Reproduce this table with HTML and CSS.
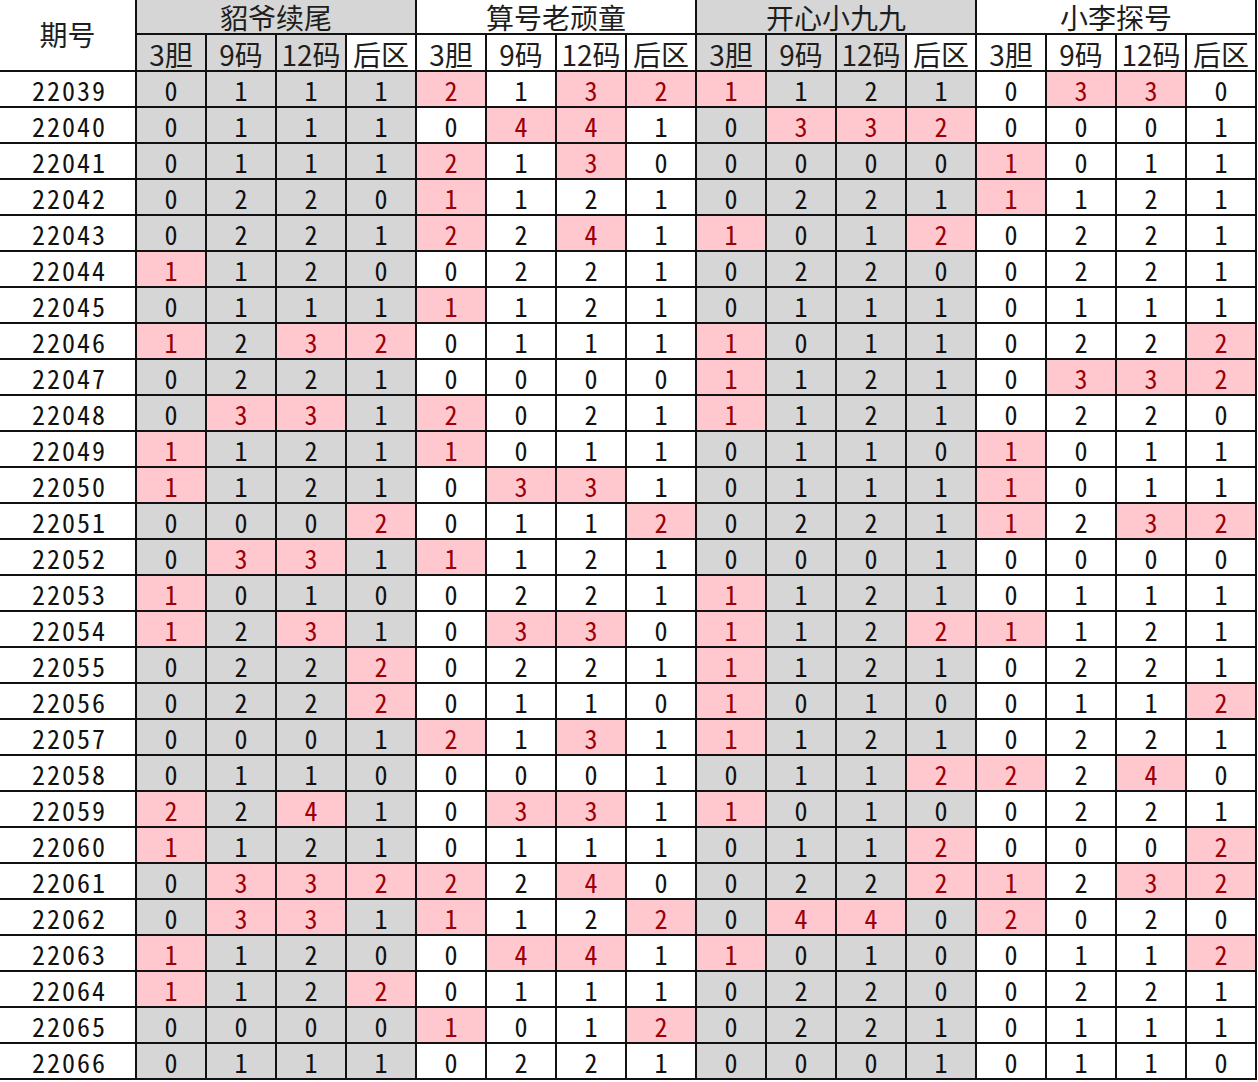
FILE: index.html
```html
<!DOCTYPE html>
<html lang="zh">
<head>
<meta charset="utf-8">
<title>期号统计</title>
<link rel="stylesheet" href="styles.css">
</head>
<body>
<table class="stats">
<colgroup>
<col class="c-id">
<col class="c"><col class="c"><col class="c"><col class="c">
<col class="c"><col class="c"><col class="c"><col class="c">
<col class="c"><col class="c"><col class="c"><col class="c">
<col class="c"><col class="c"><col class="c"><col class="c">
</colgroup>
<thead>
<tr class="h1">
<th rowspan="2" class="qh">期号</th>
<th colspan="4" class="g">貂爷续尾</th>
<th colspan="4">算号老顽童</th>
<th colspan="4" class="g">开心小九九</th>
<th colspan="4">小李探号</th>
</tr>
<tr class="h2">
<th class="g">3胆</th><th class="g">9码</th><th class="g">12码</th><th>后区</th>
<th>3胆</th><th>9码</th><th>12码</th><th>后区</th>
<th class="g">3胆</th><th class="g">9码</th><th class="g">12码</th><th>后区</th>
<th>3胆</th><th>9码</th><th>12码</th><th>后区</th>
</tr>
</thead>
<tbody>
<tr><td class="id">22039</td><td class="g">0</td><td class="g">1</td><td class="g">1</td><td class="g">1</td><td class="p">2</td><td>1</td><td class="p">3</td><td class="p">2</td><td class="p">1</td><td class="g">1</td><td class="g">2</td><td class="g">1</td><td>0</td><td class="p">3</td><td class="p">3</td><td>0</td></tr>
<tr><td class="id">22040</td><td class="g">0</td><td class="g">1</td><td class="g">1</td><td class="g">1</td><td>0</td><td class="p">4</td><td class="p">4</td><td>1</td><td class="g">0</td><td class="p">3</td><td class="p">3</td><td class="p">2</td><td>0</td><td>0</td><td>0</td><td>1</td></tr>
<tr><td class="id">22041</td><td class="g">0</td><td class="g">1</td><td class="g">1</td><td class="g">1</td><td class="p">2</td><td>1</td><td class="p">3</td><td>0</td><td class="g">0</td><td class="g">0</td><td class="g">0</td><td class="g">0</td><td class="p">1</td><td>0</td><td>1</td><td>1</td></tr>
<tr><td class="id">22042</td><td class="g">0</td><td class="g">2</td><td class="g">2</td><td class="g">0</td><td class="p">1</td><td>1</td><td>2</td><td>1</td><td class="g">0</td><td class="g">2</td><td class="g">2</td><td class="g">1</td><td class="p">1</td><td>1</td><td>2</td><td>1</td></tr>
<tr><td class="id">22043</td><td class="g">0</td><td class="g">2</td><td class="g">2</td><td class="g">1</td><td class="p">2</td><td>2</td><td class="p">4</td><td>1</td><td class="p">1</td><td class="g">0</td><td class="g">1</td><td class="p">2</td><td>0</td><td>2</td><td>2</td><td>1</td></tr>
<tr><td class="id">22044</td><td class="p">1</td><td class="g">1</td><td class="g">2</td><td class="g">0</td><td>0</td><td>2</td><td>2</td><td>1</td><td class="g">0</td><td class="g">2</td><td class="g">2</td><td class="g">0</td><td>0</td><td>2</td><td>2</td><td>1</td></tr>
<tr><td class="id">22045</td><td class="g">0</td><td class="g">1</td><td class="g">1</td><td class="g">1</td><td class="p">1</td><td>1</td><td>2</td><td>1</td><td class="g">0</td><td class="g">1</td><td class="g">1</td><td class="g">1</td><td>0</td><td>1</td><td>1</td><td>1</td></tr>
<tr><td class="id">22046</td><td class="p">1</td><td class="g">2</td><td class="p">3</td><td class="p">2</td><td>0</td><td>1</td><td>1</td><td>1</td><td class="p">1</td><td class="g">0</td><td class="g">1</td><td class="g">1</td><td>0</td><td>2</td><td>2</td><td class="p">2</td></tr>
<tr><td class="id">22047</td><td class="g">0</td><td class="g">2</td><td class="g">2</td><td class="g">1</td><td>0</td><td>0</td><td>0</td><td>0</td><td class="p">1</td><td class="g">1</td><td class="g">2</td><td class="g">1</td><td>0</td><td class="p">3</td><td class="p">3</td><td class="p">2</td></tr>
<tr><td class="id">22048</td><td class="g">0</td><td class="p">3</td><td class="p">3</td><td class="g">1</td><td class="p">2</td><td>0</td><td>2</td><td>1</td><td class="p">1</td><td class="g">1</td><td class="g">2</td><td class="g">1</td><td>0</td><td>2</td><td>2</td><td>0</td></tr>
<tr><td class="id">22049</td><td class="p">1</td><td class="g">1</td><td class="g">2</td><td class="g">1</td><td class="p">1</td><td>0</td><td>1</td><td>1</td><td class="g">0</td><td class="g">1</td><td class="g">1</td><td class="g">0</td><td class="p">1</td><td>0</td><td>1</td><td>1</td></tr>
<tr><td class="id">22050</td><td class="p">1</td><td class="g">1</td><td class="g">2</td><td class="g">1</td><td>0</td><td class="p">3</td><td class="p">3</td><td>1</td><td class="g">0</td><td class="g">1</td><td class="g">1</td><td class="g">1</td><td class="p">1</td><td>0</td><td>1</td><td>1</td></tr>
<tr><td class="id">22051</td><td class="g">0</td><td class="g">0</td><td class="g">0</td><td class="p">2</td><td>0</td><td>1</td><td>1</td><td class="p">2</td><td class="g">0</td><td class="g">2</td><td class="g">2</td><td class="g">1</td><td class="p">1</td><td>2</td><td class="p">3</td><td class="p">2</td></tr>
<tr><td class="id">22052</td><td class="g">0</td><td class="p">3</td><td class="p">3</td><td class="g">1</td><td class="p">1</td><td>1</td><td>2</td><td>1</td><td class="g">0</td><td class="g">0</td><td class="g">0</td><td class="g">1</td><td>0</td><td>0</td><td>0</td><td>0</td></tr>
<tr><td class="id">22053</td><td class="p">1</td><td class="g">0</td><td class="g">1</td><td class="g">0</td><td>0</td><td>2</td><td>2</td><td>1</td><td class="p">1</td><td class="g">1</td><td class="g">2</td><td class="g">1</td><td>0</td><td>1</td><td>1</td><td>1</td></tr>
<tr><td class="id">22054</td><td class="p">1</td><td class="g">2</td><td class="p">3</td><td class="g">1</td><td>0</td><td class="p">3</td><td class="p">3</td><td>0</td><td class="p">1</td><td class="g">1</td><td class="g">2</td><td class="p">2</td><td class="p">1</td><td>1</td><td>2</td><td>1</td></tr>
<tr><td class="id">22055</td><td class="g">0</td><td class="g">2</td><td class="g">2</td><td class="p">2</td><td>0</td><td>2</td><td>2</td><td>1</td><td class="p">1</td><td class="g">1</td><td class="g">2</td><td class="g">1</td><td>0</td><td>2</td><td>2</td><td>1</td></tr>
<tr><td class="id">22056</td><td class="g">0</td><td class="g">2</td><td class="g">2</td><td class="p">2</td><td>0</td><td>1</td><td>1</td><td>0</td><td class="p">1</td><td class="g">0</td><td class="g">1</td><td class="g">0</td><td>0</td><td>1</td><td>1</td><td class="p">2</td></tr>
<tr><td class="id">22057</td><td class="g">0</td><td class="g">0</td><td class="g">0</td><td class="g">1</td><td class="p">2</td><td>1</td><td class="p">3</td><td>1</td><td class="p">1</td><td class="g">1</td><td class="g">2</td><td class="g">1</td><td>0</td><td>2</td><td>2</td><td>1</td></tr>
<tr><td class="id">22058</td><td class="g">0</td><td class="g">1</td><td class="g">1</td><td class="g">0</td><td>0</td><td>0</td><td>0</td><td>1</td><td class="g">0</td><td class="g">1</td><td class="g">1</td><td class="p">2</td><td class="p">2</td><td>2</td><td class="p">4</td><td>0</td></tr>
<tr><td class="id">22059</td><td class="p">2</td><td class="g">2</td><td class="p">4</td><td class="g">1</td><td>0</td><td class="p">3</td><td class="p">3</td><td>1</td><td class="p">1</td><td class="g">0</td><td class="g">1</td><td class="g">0</td><td>0</td><td>2</td><td>2</td><td>1</td></tr>
<tr><td class="id">22060</td><td class="p">1</td><td class="g">1</td><td class="g">2</td><td class="g">1</td><td>0</td><td>1</td><td>1</td><td>1</td><td class="g">0</td><td class="g">1</td><td class="g">1</td><td class="p">2</td><td>0</td><td>0</td><td>0</td><td class="p">2</td></tr>
<tr><td class="id">22061</td><td class="g">0</td><td class="p">3</td><td class="p">3</td><td class="p">2</td><td class="p">2</td><td>2</td><td class="p">4</td><td>0</td><td class="g">0</td><td class="g">2</td><td class="g">2</td><td class="p">2</td><td class="p">1</td><td>2</td><td class="p">3</td><td class="p">2</td></tr>
<tr><td class="id">22062</td><td class="g">0</td><td class="p">3</td><td class="p">3</td><td class="g">1</td><td class="p">1</td><td>1</td><td>2</td><td class="p">2</td><td class="g">0</td><td class="p">4</td><td class="p">4</td><td class="g">0</td><td class="p">2</td><td>0</td><td>2</td><td>0</td></tr>
<tr><td class="id">22063</td><td class="p">1</td><td class="g">1</td><td class="g">2</td><td class="g">0</td><td>0</td><td class="p">4</td><td class="p">4</td><td>1</td><td class="p">1</td><td class="g">0</td><td class="g">1</td><td class="g">0</td><td>0</td><td>1</td><td>1</td><td class="p">2</td></tr>
<tr><td class="id">22064</td><td class="p">1</td><td class="g">1</td><td class="g">2</td><td class="p">2</td><td>0</td><td>1</td><td>1</td><td>1</td><td class="g">0</td><td class="g">2</td><td class="g">2</td><td class="g">0</td><td>0</td><td>2</td><td>2</td><td>1</td></tr>
<tr><td class="id">22065</td><td class="g">0</td><td class="g">0</td><td class="g">0</td><td class="g">0</td><td class="p">1</td><td>0</td><td>1</td><td class="p">2</td><td class="g">0</td><td class="g">2</td><td class="g">2</td><td class="g">1</td><td>0</td><td>1</td><td>1</td><td>1</td></tr>
<tr><td class="id">22066</td><td class="g">0</td><td class="g">1</td><td class="g">1</td><td class="g">1</td><td>0</td><td>2</td><td>2</td><td>1</td><td class="g">0</td><td class="g">0</td><td class="g">0</td><td class="g">1</td><td>0</td><td>1</td><td>1</td><td>0</td></tr>
</tbody>
</table>
</body>
</html>
```

FILE: styles.css
```css
html, body {
  margin: 0;
  padding: 0;
  background: #ffffff;
}

.stats {
  border-collapse: separate;
  border-spacing: 0;
  table-layout: fixed;
  width: 1257px;
}

.c-id { width: 137px; }
.c { width: 70px; }

.stats th,
.stats td {
  border-right: 2px solid #111111;
  border-bottom: 2px solid #111111;
  padding: 0;
  text-align: center;
  vertical-align: middle;
  white-space: nowrap;
  background: #ffffff;
}

.stats th {
  font-family: "Noto Sans CJK SC", "Noto Sans", sans-serif;
  font-weight: 400;
  font-size: 28px;
  line-height: 1.05;
  color: #1e1e1e;
}

.h1 th { padding-top: 3px; }
.h1 .qh { padding-top: 0; }
.h2 th { padding-top: 4px; }

.stats td {
  font-family: "Noto Sans Mono CJK SC", "Liberation Mono", monospace;
  font-weight: 300;
  font-size: 26px;
  line-height: 1.1;
  color: #111111;
  padding-top: 3px;
}

.stats td.id {
  letter-spacing: 2px;
  text-indent: 4px;
}

.h1 { height: 35px; }
.h2 { height: 37px; }
.stats tbody tr { height: 36px; }

.stats .g { background: #d6d6d6; }
.stats .p { background: #ffc7ce; color: #9c0006; }
```
